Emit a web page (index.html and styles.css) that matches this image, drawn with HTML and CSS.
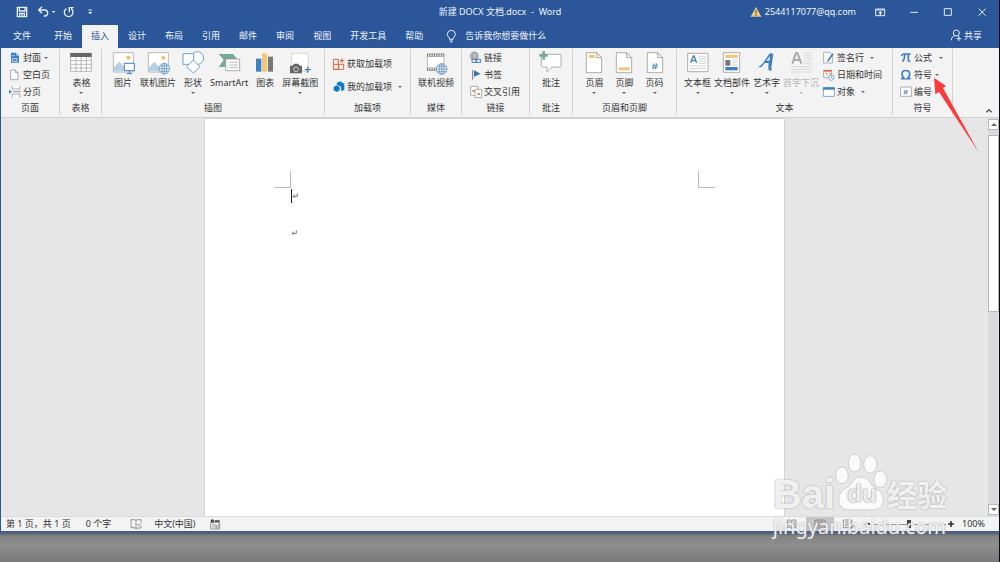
FILE: index.html
```html
<!DOCTYPE html>
<html lang="zh-CN">
<head>
<meta charset="utf-8">
<title>新建 DOCX 文档.docx - Word</title>
<link rel="stylesheet" href="styles.css">
</head>
<body>
<div class="window">
  <header class="titlebar">
    <div class="quick">
      <button class="icon-btn" aria-label="保存"><svg width="12" height="12" viewBox="48 21 36 36"><path d="M52 25h28v28h-28z M58 25v11h17v-11 M59 53v-10h14v10 M66 44v9" class="w-line thick"/></svg></button>
      <button class="icon-btn undo" aria-label="撤消"><svg width="18" height="12" viewBox="112 21 54 36"><path d="M118 33h17c12 0 12 18 0 18h-3 M127 23l-10 10 10 10" class="w-line thick"/><path d="M156 36h11l-5 6z" class="w-fill"/></svg></button>
      <button class="icon-btn" aria-label="重复"><svg width="12" height="12" viewBox="188 21 36 36"><path d="M198 29a13 13 0 1 0 14 0 M207 40v-14h13" class="w-line thick"/></svg></button>
      <button class="icon-btn customize" aria-label="自定义快速访问工具栏"><svg width="8" height="8" viewBox="257 28 24 24"><path d="M264 34h11" class="w-line"/><path d="M263 40h13l-6 7z" class="w-fill"/></svg></button>
    </div>
    <h1 class="title">新建 DOCX 文档.docx&nbsp; -&nbsp; Word</h1>
    <div class="account">
      <button class="user"><svg width="12" height="12" viewBox="29 17 36 36"><path d="M47 20l16 29H31z" fill="#f0c983"/><path d="M47 29v11M47 43v4" stroke="#4d4030" stroke-width="3"/></svg>2544117077@qq.com</button>
      <button class="icon-btn display" aria-label="功能区显示选项"><svg width="12" height="10" viewBox="405 20 36 30"><path d="M410 26h27v20h-27z M410 29h27" class="w-line"/><path d="M422 44v-5h-5l7-7 7 7h-5v5z" class="w-fill"/></svg></button>
      <button class="icon-btn win" aria-label="最小化"><svg width="10" height="10" viewBox="510 21 30 30"><path d="M514 37h23" class="w-line"/></svg></button>
      <button class="icon-btn win" aria-label="最大化"><svg width="10" height="10" viewBox="612 21 30 30"><path d="M616 26h21v20h-21z" class="w-line"/></svg></button>
      <button class="icon-btn win" aria-label="关闭"><svg width="10" height="10" viewBox="712 21 30 30"><path d="M717 26l21 21M738 26l-21 21" class="w-line"/></svg></button>
    </div>
  </header>

  <nav class="tabs">
    <button class="tab file">文件</button>
    <button class="tab">开始</button>
    <button class="tab active">插入</button>
    <button class="tab">设计</button>
    <button class="tab">布局</button>
    <button class="tab">引用</button>
    <button class="tab">邮件</button>
    <button class="tab">审阅</button>
    <button class="tab">视图</button>
    <button class="tab">开发工具</button>
    <button class="tab">帮助</button>
    <button class="tell"><svg width="12" height="14" viewBox="735 25 36 42"><path d="M749 56c0-6-7-8-7-15a12 12 0 0 1 24 0c0 7-7 9-7 15z M749 61h10 M752 65h4" class="w-line"/></svg>告诉我你想要做什么</button>
    <button class="share"><svg width="12" height="13" viewBox="628 90 36 39"><circle cx="647" cy="102" r="9" class="w-line"/><path d="M632 124c0-8 5-13 11-14 M651 110l4 4 M647 119h15M655 112v14" class="w-line"/></svg>共享</button>
  </nav>

  <section class="ribbon">
    <div class="group pages">
      <div class="tools column">
        <button class="small"><svg width="12" height="14" viewBox="27 154 36 42"><path d="M33 159h15l9 9v21H33z" fill="#3e7fbf"/><path d="M48 159v9h9z" fill="#9fc3e4"/><path d="M37 177h14v8h-14zM36 168h8" fill="none" stroke="#fff" stroke-width="2"/></svg>封面<i class="arrow"></i></button>
        <button class="small"><svg width="12" height="14" viewBox="27 203 36 42"><path d="M32 209h14l8 8v21H32z M46 209v8h8" class="g-line"/></svg>空白页</button>
        <button class="small"><svg width="12" height="14" viewBox="26 253 36 42"><path d="M36 256v9h22v-9 M36 291v-11h22v11" class="g-line"/><path d="M38 273h25" stroke="#777" stroke-width="2"/><path d="M26 267l9 6-9 6z" fill="#3e7fbf"/></svg>分页</button>
      </div>
      <h2>页面</h2>
    </div>
    <div class="group table">
      <div class="tools">
        <button class="large"><svg width="24" height="26" viewBox="208 156 72 78"><path d="M213 163h62v54h-62z" fill="#fff" stroke="#999" stroke-width="2"/><path d="M212 162h64v12h-64z" fill="#666"/><path d="M213 185h62M213 196h62M213 207h62M229 174v43M244 174v43M260 174v43" stroke="#999" stroke-width="2"/></svg>表格<i class="arrow"></i></button>
      </div>
      <h2>表格</h2>
    </div>
    <div class="group pictures">
      <div class="tools">
        <button class="large"><svg width="24" height="26" viewBox="34 21 72 78"><path d="M41 26h60v58h-60z" fill="#fff" stroke="#999" stroke-width="2"/><path d="M43 82V69l16-16 22 24v5z" fill="#b9cfe6"/><circle cx="86" cy="41" r="6" fill="#efbf62"/><path d="M74 58h30v22H74z" fill="#fff" stroke="#3e7fbf" stroke-width="3"/><path d="M89 80v8M81 89h16" stroke="#3e7fbf" stroke-width="3"/></svg>图片</button>
        <button class="large"><svg width="24" height="26" viewBox="138 21 72 78"><path d="M145 26h60v58h-60z" fill="#fff" stroke="#999" stroke-width="2"/><path d="M147 82V69l16-16 22 24v5z" fill="#b9cfe6"/><circle cx="190" cy="41" r="6" fill="#efbf62"/><g fill="#f3f3f3" stroke="#4a86bd" stroke-width="2"><circle cx="193" cy="74" r="16"/><ellipse cx="193" cy="74" rx="7" ry="16"/><path d="M177 74h32M180 66h26M180 82h26M193 58v32"/></g></svg>联机图片</button>
        <button class="large"><svg width="24" height="26" viewBox="242 21 72 78"><g fill="#fff" stroke="#6da0cf" stroke-width="3"><circle cx="291" cy="42" r="19"/><path d="M248 29h32v32h-32z"/><path d="M279 48l20 20-20 19-20-19z"/></g></svg>形状<i class="arrow"></i></button>
        <button class="large"><svg width="24" height="26" viewBox="351 21 72 78"><path d="M356 30h43l15 18-15 21h-43l15-21z" fill="#76aa96"/><path d="M377 45h42v35h-42z" fill="#fff" stroke="#888" stroke-width="2"/><path d="M388 55h26M388 63h26M388 71h26M381 55h3M381 63h3M381 71h3" stroke="#999" stroke-width="2"/></svg>SmartArt</button>
        <button class="large"><svg width="24" height="26" viewBox="459 21 72 78"><path d="M468 44h16v39h-16z" fill="#3e7fbf"/><path d="M486 28h16v55h-16z" fill="#efc778"/><path d="M504 38h15v45h-15z" fill="#777"/></svg>图表</button>
        <button class="large"><svg width="24" height="26" viewBox="561 21 72 78"><path d="M572 28h50v54h-50z" fill="#fff" stroke="#999" stroke-width="2" stroke-dasharray="3 3"/><path d="M567 65h8l4-6h13l4 6h7v23h-36z" fill="#666"/><circle cx="585" cy="76" r="7" fill="none" stroke="#fff" stroke-width="2"/><path d="M611 77h18M620 68v18" stroke="#3e7fbf" stroke-width="4"/></svg>屏幕截图<i class="arrow"></i></button>
      </div>
      <h2>插图</h2>
    </div>
    <div class="group addins">
      <div class="tools column">
        <button class="small"><svg width="14" height="14" viewBox="36 36 42 42"><path d="M40 43h15v30H40zM40 58h31v15H40M56 58v15" fill="none" stroke="#d9653b" stroke-width="3"/><path d="M66 40v14M59 47h14" stroke="#d9653b" stroke-width="3"/></svg>获取加载项</button>
        <button class="small"><svg width="14" height="14" viewBox="36 104 42 42"><path d="M50 113l10-5 13 7v18l-9 5-1-14-12-6z" fill="#0f78cf"/><path d="M41 125l9-5 9 5v10l-9 5-9-5z" fill="#0f78cf"/></svg>我的加载项<i class="arrow far"></i></button>
      </div>
      <h2>加载项</h2>
    </div>
    <div class="group">
      <div class="tools">
        <button class="large"><svg width="24" height="26" viewBox="314 21 72 78"><path d="M323 30h52v49h-52z" fill="#fff"/><path d="M323 30h52M323 37h52M323 72h30M323 79h30" stroke="#777" stroke-width="2"/><path d="M323 33h52M323 76h28" stroke="#777" stroke-width="7" stroke-dasharray="3 4"/><path d="M324 37v35M374 37v25" stroke="#999" stroke-width="2"/><g fill="#f3f3f3" stroke="#4a86bd" stroke-width="2"><circle cx="367" cy="75" r="16"/><ellipse cx="367" cy="75" rx="7" ry="16"/><path d="M351 75h32M354 67h26M354 83h26M367 59v32"/></g></svg>联机视频</button>
      </div>
      <h2>媒体</h2>
    </div>
    <div class="group links">
      <div class="tools column">
        <button class="small"><svg width="14" height="14" viewBox="447 19 42 42"><g fill="none" stroke="#777" stroke-width="2"><circle cx="463" cy="34" r="12"/><ellipse cx="463" cy="34" rx="5" ry="12"/><path d="M451 34h24M453 28h20M453 40h20"/></g><path d="M456 44h14v9h-14zM468 44h14v9h-14z" fill="#f3f3f3" stroke="#3e7fbf" stroke-width="3"/></svg>链接</button>
        <button class="small"><svg width="14" height="14" viewBox="447 68 42 42"><path d="M458 74v29" stroke="#777" stroke-width="3"/><path d="M462 75l20 10-20 9z" fill="#3f6fa8"/></svg>书签</button>
        <button class="small"><svg width="14" height="14" viewBox="447 118 42 42"><path d="M452 122h22v27h-22z" class="g-line"/><path d="M465 131h20v25h-20z" class="g-line"/><path d="M457 136h7M472 145h8" stroke="#d9653b" stroke-width="5"/></svg>交叉引用</button>
      </div>
      <h2>链接</h2>
    </div>
    <div class="group">
      <div class="tools">
        <button class="large"><svg width="24" height="26" viewBox="658 21 72 78"><path d="M665 31h55q4 0 4 4v30q0 4-4 4h-24l-14 14v-14h-13q-4 0-4-4z" fill="#fff" stroke="#888" stroke-width="2"/><path d="M659 34h25M672 22v25" stroke="#76aa96" stroke-width="8"/></svg>批注</button>
      </div>
      <h2>批注</h2>
    </div>
    <div class="group header-footer">
      <div class="tools">
        <button class="large"><svg width="18" height="26" viewBox="75 21 54 78"><path d="M79 26h31l15 15v45H79z M110 26v15h15" class="g-line"/><path d="M86 32h18v10H86z" fill="#efc778"/></svg>页眉<i class="arrow"></i></button>
        <button class="large"><svg width="18" height="26" viewBox="165 21 54 78"><path d="M169 26h31l15 15v45h-46z M200 26v15h15" class="g-line"/><path d="M176 70h33v9h-33z" fill="#efc778"/></svg>页脚<i class="arrow"></i></button>
        <button class="large"><svg width="18" height="26" viewBox="258 21 54 78"><path d="M262 26h31l15 15v45h-46z M293 26v15h15" class="g-line"/><path d="M283 58l-4 18M290 58l-4 18M277 64h17M276 71h17" stroke="#3e7fbf" stroke-width="2.5"/></svg>页码<i class="arrow"></i></button>
      </div>
      <h2>页眉和页脚</h2>
    </div>
    <div class="group texts">
      <div class="tools">
        <button class="large"><svg width="24" height="26" viewBox="377 21 72 78"><path d="M382 28h61v55h-61z" class="g-line"/><path d="M391 56l8-20h2l8 20M394 50h12" fill="none" stroke="#3e7fbf" stroke-width="4"/><path d="M415 37h22M415 44h22M415 51h22M415 58h22M389 66h48M389 74h48" stroke="#bbb" stroke-width="2"/></svg>文本框<i class="arrow"></i></button>
        <button class="large"><svg width="24" height="26" viewBox="480 21 72 78"><path d="M490 26h49v59h-49z" class="g-line"/><path d="M496 32h37v10h-37z" fill="#efc778"/><path d="M496 48h15v17h-15z" fill="#777"/><path d="M496 69h37v10h-37z" fill="#3e7fbf"/><path d="M515 49h18M515 56h18M515 63h18" stroke="#bbb" stroke-width="2"/></svg>文档部件<i class="arrow"></i></button>
        <button class="large"><svg width="24" height="26" viewBox="586 21 72 78"><path d="M597 68c5 3 9 2 13-4l5-7h12l-1 15c0 8 4 10 10 7l-1-9 6-41-10-1c-13 14-20 35-34 40z M620 50l11-14-2 14z" fill="#3e7fbf" fill-rule="evenodd"/></svg>艺术字<i class="arrow"></i></button>
        <button class="large" disabled><svg width="24" height="26" viewBox="28 21 72 78"><path d="M38 59l11-32h4l12 32M42 48h19" fill="none" stroke="#aaa" stroke-width="6"/><path d="M72 27h24M72 35h24M72 43h24M72 51h24M72 59h24M34 68h62M34 76h62M34 84h62" stroke="#ccc" stroke-width="2"/></svg>首字下沉<i class="arrow"></i></button>
        <div class="column">
          <button class="small"><svg width="14" height="14" viewBox="128 19 42 42"><path d="M133 23h18l8 8v24h-26z" class="g-line"/><path d="M163 29l-14 19-6 5 2-8 14-19z" fill="#3e7fbf"/></svg>签名行<i class="arrow far"></i></button>
          <button class="small"><svg width="14" height="14" viewBox="128 68 42 42"><path d="M133 75h24v22h-24z" class="g-line"/><path d="M133 74h24v5h-24z" fill="#d9653b"/><path d="M138 83h5v8M148 83h5v6" fill="none" stroke="#d9653b" stroke-width="2"/><circle cx="156" cy="97" r="8" fill="#fff" stroke="#4a86bd" stroke-width="2"/><path d="M156 91v7h5" fill="none" stroke="#4a86bd" stroke-width="2"/></svg>日期和时间</button>
          <button class="small"><svg width="14" height="14" viewBox="128 119 42 42"><path d="M132 127h33v26h-33z" fill="#fff" stroke="#3e7fbf" stroke-width="2"/><path d="M131 126h35v7h-35z" fill="#3e7fbf"/></svg>对象<i class="arrow far"></i></button>
        </div>
      </div>
      <h2>文本</h2>
    </div>
    <div class="group symbols">
      <div class="tools column">
        <button class="small"><svg width="12" height="14" viewBox="359 19 36 42"><path d="M364 34q1-6 6-6h21M373 30q0 15-7 21M384 30v16q0 5 6 4" fill="none" stroke="#3e7fbf" stroke-width="5"/></svg>公式<i class="arrow far"></i></button>
        <button class="small"><svg width="12" height="14" viewBox="361 69 36 42"><path d="M364 101h10q-7-6-7-14c0-14 23-14 23 0q0 8-7 14h10" fill="none" stroke="#3e7fbf" stroke-width="5"/></svg>符号<i class="arrow"></i></button>
        <button class="small"><svg width="12" height="14" viewBox="360 118 36 42"><path d="M362 124h32v28h-32z" class="g-line"/><path d="M376 133l-3 13M381 133l-3 13M371 137h13M370 142h13" stroke="#3e7fbf" stroke-width="2"/></svg>编号</button>
      </div>
      <h2>符号</h2>
    </div>
    <div class="ribbon-end">
      <button class="icon-btn" aria-label="折叠功能区"><svg width="8" height="8" viewBox="0 0 24 24"><path d="M4 16l8-8 8 8" fill="none" stroke="#555" stroke-width="4"/></svg></button>
    </div>
  </section>

  <main class="workspace">
    <div class="canvas">
      <article class="page">
        <div class="margins"><span class="crop left"></span><span class="crop right"></span></div>
        <p class="para"><span class="caret"></span><svg width="6" height="6" viewBox="0 0 18 18"><path d="M16 1v9H4M8 5l-5 5 5 5" class="mark"/></svg></p>
        <p class="para"><svg width="6" height="6" viewBox="0 0 18 18"><path d="M16 1v9H4M8 5l-5 5 5 5" class="mark"/></svg></p>
      </article>
    </div>
    <div class="scrollbar">
      <button class="scroll-btn" aria-label="向上滚动"><i class="arrow up"></i></button>
      <div class="track"><div class="thumb"></div></div>
      <button class="scroll-btn" aria-label="向下滚动"><i class="arrow"></i></button>
    </div>
  </main>

  <footer class="status">
    <span class="count">第 1 页，共 1 页</span>
    <span>0 个字</span>
    <button class="icon-btn proof" aria-label="校对"><svg width="12" height="12" viewBox="390 37 36 36"><path d="M408 44l-5-2h-10v24h10l5 3v-25l4-2h11v7M423 60v7h-10l-5 3" class="s-line"/><path d="M412 55l4 5 8-9" class="s-line"/></svg></button>
    <button class="lang">中文(中国)</button>
    <button class="icon-btn" aria-label="宏"><svg width="12" height="12" viewBox="624 37 36 36"><path d="M629 50h27v20h-27z M633 57h5M633 63h5M642 55v13M647 58v10M652 55v13" class="s-line"/><circle cx="634" cy="46" r="5" fill="#444"/><path d="M641 43h15v7h-15z" fill="#666"/></svg></button>
    <div class="views">
      <button class="view" aria-label="阅读视图"><svg width="12" height="10" viewBox="138 235 36 30"><path d="M155 240l-4-2h-9v22h9l4 3 4-3h9v-22h-9zv23M145 244h6M145 250h6M145 255h6M159 244h6M159 250h6M159 255h6" class="s-line"/></svg></button>
      <button class="view current" aria-label="页面视图"><svg width="12" height="10" viewBox="222 235 36 30"><path d="M225 238h30v24h-30z M230 244h20M230 250h20M230 256h20" class="s-line"/></svg></button>
      <button class="view" aria-label="Web 版式视图"><svg width="12" height="10" viewBox="304 235 36 30"><path d="M308 238h25v23h-25z M313 244h15M313 250h10M313 255h7" class="s-line"/><circle cx="331" cy="256" r="7" class="s-line"/></svg></button>
      <button class="zoom-step" aria-label="缩小"><svg width="10" height="10" viewBox="0 0 10 10"><path d="M2 5h6" stroke="#333" stroke-width="2"/></svg></button>
      <input class="zoom" type="range" min="0" max="100" value="50" aria-label="显示比例">
      <button class="zoom-step" aria-label="放大"><svg width="10" height="10" viewBox="0 0 10 10"><path d="M2 5h6M5 2v6" stroke="#333" stroke-width="1.6"/></svg></button>
      <button class="percent">100%</button>
    </div>
  </footer>
</div>
<div class="desktop"></div>

<svg class="pointer" width="50" height="80" viewBox="450 90 150 240" aria-hidden="true"><path d="M462 98l36 25-9 6 107 193-119-181-11 7z" fill="#f93b3b"/></svg>

<div class="watermark" aria-hidden="true">
  <div class="brand">
    <span class="bai">Bai</span>
    <span class="paw"><svg width="56" height="60" viewBox="262 40 168 180"><g fill="#fafafa" stroke="#cfcfcf" stroke-width="3"><ellipse cx="286" cy="110" rx="19" ry="25"/><ellipse cx="324" cy="73" rx="19" ry="27"/><ellipse cx="371" cy="77" rx="20" ry="26"/><ellipse cx="401" cy="122" rx="19" ry="25"/><path d="M343 115c25 0 27 27 49 38 31 17 20 61-13 61-23 0-47 0-70 0-40 0-43-48-12-65 21-12 24-34 46-34z"/></g></svg><b>du</b></span>
    <span class="exp">经验</span>
  </div>
  <div class="site">jingyan.baidu.com</div>
</div>
</body>
</html>
```

FILE: styles.css
```css
* { box-sizing: border-box; }

body {
  margin: 0;
  height: 100vh;
  display: flex;
  flex-direction: column;
  overflow: hidden;
  position: relative;
  border-right: 1px solid #0a0a10;
  font: 9px/12px "Noto Sans", "Noto Sans CJK SC", sans-serif;
  color: #333;
}

button {
  margin: 0;
  padding: 0;
  border: 0;
  background: none;
  color: inherit;
  font: inherit;
  white-space: nowrap;
}

svg { display: block; flex: none; }
h1, h2, p { margin: 0; font: inherit; }

.w-line { fill: none; stroke: #e6edf7; stroke-width: 3; }
.thick { stroke-width: 4; }
.w-fill { fill: #e6edf7; }
.g-line { fill: #fff; stroke: #888; stroke-width: 2; }
.s-line { fill: none; stroke: #666; stroke-width: 2; }
.mark { fill: none; stroke: #777; stroke-width: 3; }

.window {
  flex: 1;
  min-height: 0;
  display: flex;
  flex-direction: column;
  border-left: 1px solid #2b579a;
  border-bottom: 2px solid #3d5f98;
}

.titlebar {
  display: grid;
  grid-template-columns: 1fr auto 1fr;
  align-items: center;
  height: 25px;
  padding-bottom: 1px;
  background: #2b579a;
  color: #f0f4fa;
}
.quick { display: flex; align-items: center; gap: 8px; padding-left: 15px; }
.undo { margin-left: 1px; }
.customize { margin-left: 3px; }
.account { display: flex; align-items: center; justify-content: flex-end; padding-right: 12px; }
.user { display: flex; align-items: center; gap: 3px; margin-right: 18px; }
.display { margin-right: 23px; }
.win + .win { margin-left: 24px; }

.tabs {
  display: flex;
  align-items: stretch;
  gap: 1px;
  height: 23px;
  background: #2b579a;
  color: #f0f4fa;
}
.tab { padding: 0 9px 2px; }
.tab.file { padding: 0 12px 2px; margin-right: 1px; }
.tab.active { background: #f3f3f3; color: #2b579a; }
.tell { display: flex; align-items: center; gap: 8px; margin-left: 12px; padding-bottom: 2px; }
.share { display: flex; align-items: center; gap: 2px; margin-left: auto; padding: 0 17px 2px 0; }

.ribbon {
  display: grid;
  grid-template-columns: 59fr 42fr 223fr 86fr 51fr 68fr 43fr 104fr 216fr 60fr 46fr;
  height: 70px;
  padding: 1px 0 2px;
  background: #f3f3f3;
  border-bottom: 1px solid #d0d0d0;
}
.group {
  display: flex;
  flex-direction: column;
  min-width: 0;
  border-right: 1px solid #d2d2d2;
}
.group h2 { text-align: center; padding-top: 2px; }
.tools { display: flex; justify-content: center; height: 51px; }
.column { display: flex; flex-direction: column; justify-content: flex-start; }
.large {
  display: flex;
  flex-direction: column;
  align-items: center;
  padding-top: 2px;
}
.large svg { margin: 0 -3px; }
.large .arrow { margin-top: 3px; }
.large:disabled { color: #b5b5b5; }
.small { display: flex; align-items: center; gap: 2px; height: 17px; }

.arrow {
  width: 0;
  height: 0;
  margin-left: 1px;
  border: 2px solid transparent;
  border-top-color: #666;
  border-bottom: 0;
}
.arrow.far { margin-left: 5px; }
.large .arrow { margin-left: 0; }
.large:disabled .arrow { border-top-color: #bbb; }
.arrow.up { border-top: 0; border-bottom: 2px solid #666; }

.pages .tools { padding-left: 8px; }
.table .tools { padding-left: 2px; }
.pictures .tools { justify-content: flex-start; gap: 8px; padding-left: 12px; }
.addins .tools { padding: 6px 0 0 7px; gap: 6px; }
.addins .small { gap: 1px; }
.links .tools { padding-left: 7px; }
.links .small { gap: 1px; }
.header-footer .tools { gap: 12px; }
.texts .tools { justify-content: flex-start; gap: 3px; padding-left: 7px; }
.texts .small { gap: 1px; }
.symbols .tools { padding-left: 7px; }
.ribbon-end { display: flex; align-items: flex-end; justify-content: flex-end; padding-right: 6px; }

.workspace { flex: 1; min-height: 0; display: flex; background: #e6e6e6; }
.canvas { flex: 1; display: flex; justify-content: center; }
.page {
  width: 58.8%;
  padding: 52px 69px 0;
  background: #fff;
  border: 1px solid #d4d4d4;
  border-bottom: 0;
}
.margins { display: flex; justify-content: space-between; }
.crop { width: 17px; height: 17px; border-bottom: 1px solid #bbb; }
.crop.left { border-right: 1px solid #bbb; }
.crop.right { border-left: 1px solid #bbb; }
.para { display: flex; align-items: center; height: 16px; padding-left: 17px; }
.para + .para { margin-top: 21px; }
.caret { width: 1px; height: 14px; background: #222; }

.scrollbar { width: 11px; display: flex; flex-direction: column; padding: 1px 0; background: #dadada; }
.scroll-btn {
  display: flex;
  align-items: center;
  justify-content: center;
  height: 11px;
  background: #fff;
  border: 1px solid #b8b8b8;
}
.scroll-btn .arrow { margin: 0; border-left-width: 3px; border-right-width: 3px; border-top-width: 3px; }
.scroll-btn .arrow.up { border-top-width: 0; border-bottom-width: 3px; }
.track { flex: 1; padding-top: 5px; }
.thumb { height: 48%; background: #fff; border: 1px solid #b8b8b8; }

.status {
  display: flex;
  align-items: center;
  height: 15px;
  padding-left: 5px;
  background: #f3f3f3;
  border-top: 1px solid #dcdcdc;
}
.count { margin-right: 15px; }
.proof { margin: 0 12px 0 19px; }
.lang { margin-right: 13px; }
.views { display: flex; align-items: center; margin-left: auto; padding-right: 14px; }
.view { display: flex; align-items: center; justify-content: center; width: 28px; height: 14px; }
.view.current { background: #c6c6c6; }
.zoom {
  appearance: none;
  width: 74px;
  height: 10px;
  margin: 0;
  background: linear-gradient(#999, #999) center / 100% 1px no-repeat;
}
.zoom::-webkit-slider-thumb { appearance: none; width: 4px; height: 8px; background: #444; }
.percent { margin-left: 6px; }

.desktop { height: 29px; background: linear-gradient(#606060, #828282 3px, #8e8e8e 12px, #7a7a7a); }

.pointer { position: absolute; left: 930px; top: 75px; }

.watermark {
  position: absolute;
  right: 52px;
  bottom: 23px;
  color: rgba(255, 255, 255, 0.85);
  text-shadow: 0 0 2px #999;
  pointer-events: none;
}
.brand { display: flex; align-items: flex-end; height: 62px; }
.bai { font: bold 40px/42px "Liberation Sans", sans-serif; }
.paw { position: relative; padding-bottom: 3px; margin: 0 -3px 0 -1px; }
.paw b {
  position: absolute;
  inset: 28px 0 auto;
  text-align: center;
  font: bold 24px/28px "Liberation Sans", sans-serif;
  color: #ececec;
  text-shadow: 0 0 2px #777;
}
.exp { font: bold 30px/44px "Noto Sans CJK SC", sans-serif; }
.site { font-size: 20px; line-height: 24px; }
```
